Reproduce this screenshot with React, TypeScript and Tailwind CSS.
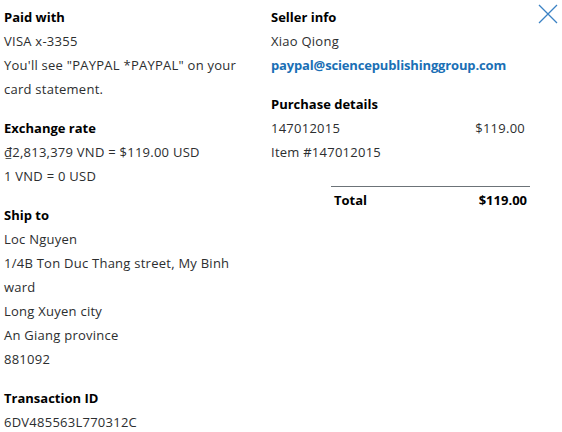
import React from "react";

function Section({ title, children, className = "" }: { title: string; children: React.ReactNode; className?: string }) {
  return (
    <div className={className}>
      <div className="font-bold text-[#000000] tracking-[0px]">{title}</div>
      {children}
    </div>
  );
}

export default function App() {
  return (
    <div
      className="relative w-[562px] h-[432px] bg-white text-[13px] leading-[24px] tracking-[0.25px] text-[#2c2e2f] overflow-hidden"
      style={{ fontFamily: '"Open Sans", sans-serif' }}
    >
      <div className="flex pt-[5px] pl-[4px]">
        <div className="w-[267px] flex flex-col gap-[15px]">
          <Section title="Paid with">
            <div className="w-[245px]">VISA x-3355</div>
            <div className="w-[245px]">You'll see "PAYPAL *PAYPAL" on your card statement.</div>
          </Section>
          <Section title="Exchange rate">
            <div>₫2,813,379 VND = $119.00 USD</div>
            <div>1 VND = 0 USD</div>
          </Section>
          <Section title="Ship to">
            <div>Loc Nguyen</div>
            <div className="w-[245px]">1/4B Ton Duc Thang street, My Binh ward</div>
            <div>Long Xuyen city</div>
            <div>An Giang province</div>
            <div>881092</div>
          </Section>
          <Section title="Transaction ID">
            <div>6DV485563L770312C</div>
          </Section>
        </div>
        <div className="w-[259px] flex flex-col gap-[15px]">
          <Section title="Seller info">
            <div>Xiao Qiong</div>
            <div className="font-bold tracking-[-0.15px] text-[#1a6fb5]">paypal@sciencepublishinggroup.com</div>
          </Section>
          <Section title="Purchase details">
            <div className="flex justify-between pr-[5px]">
              <span>147012015</span>
              <span>$119.00</span>
            </div>
            <div>Item #147012015</div>
            <div className="ml-[60px] mt-[22px] border-t border-[#6c7378] pt-[1px] flex justify-between px-[3px] font-bold tracking-[0px] text-[#000000]">
              <span>Total</span>
              <span>$119.00</span>
            </div>
          </Section>
        </div>
      </div>
      <button className="absolute left-[538px] top-[4px] w-[20px] h-[20px]" aria-label="Close">
        <svg width="20" height="20" viewBox="0 0 20 20" fill="none">
          <path d="M1 1 L19 19 M19 1 L1 19" stroke="#3b82c4" strokeWidth="1.3" />
        </svg>
      </button>
    </div>
  );
}
